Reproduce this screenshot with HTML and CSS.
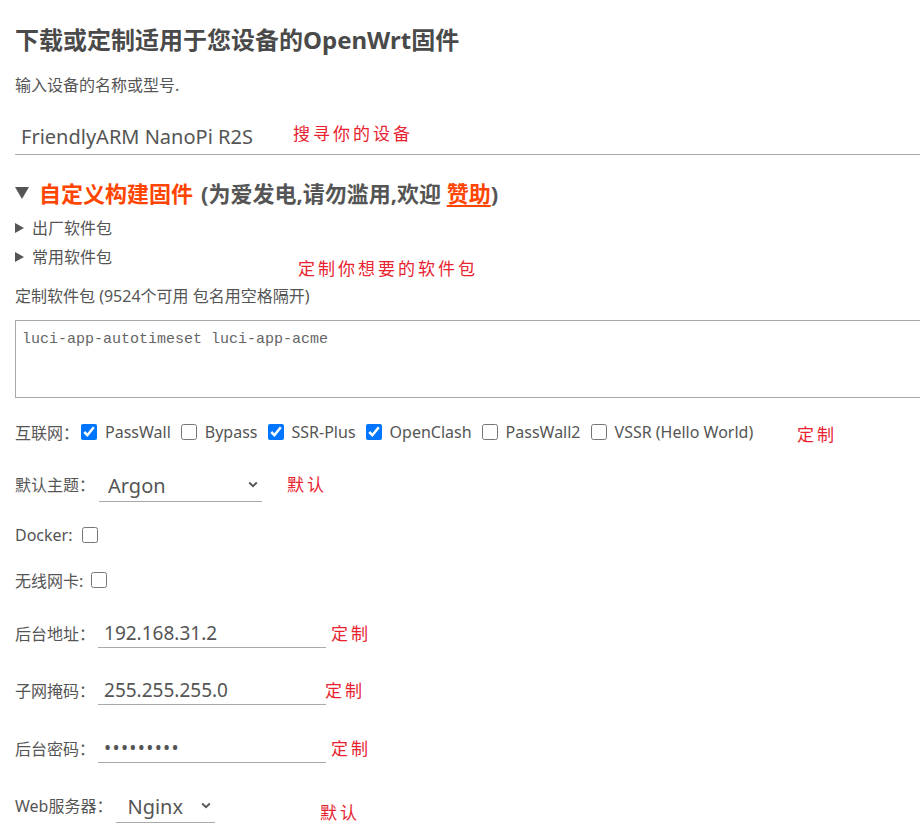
FILE: index.html
```html
<!DOCTYPE html>
<html lang="zh-CN">
<head>
<meta charset="utf-8">
<title>OpenWrt Firmware Selector</title>
<link rel="stylesheet" href="styles.css">
</head>
<body>
<main class="page">
  <h1 class="title">下载或定制适用于您设备的OpenWrt固件</h1>
  <p class="hint">输入设备的名称或型号.</p>
  <input class="model" type="text" value="FriendlyARM NanoPi R2S">

  <div class="section-head">
    <span class="tri-down"></span>
    <span class="accent">自定义构建固件</span>
    <span class="muted">(为爱发电,请勿滥用,欢迎 <a class="donate" href="#">赞助</a>)</span>
  </div>
  <div class="sub"><span class="tri-right"></span>出厂软件包</div>
  <div class="sub sub2"><span class="tri-right"></span>常用软件包</div>
  <div class="pkg-label">定制软件包 (9524个可用 包名用空格隔开)</div>
  <textarea class="pkgs">luci-app-autotimeset luci-app-acme</textarea>

  <div class="row r-net">
    <span class="lbl">互联网：</span>
    <input type="checkbox" class="cb cb-first" checked><span class="opt">PassWall</span>
    <input type="checkbox" class="cb"><span class="opt">Bypass</span>
    <input type="checkbox" class="cb" checked><span class="opt">SSR-Plus</span>
    <input type="checkbox" class="cb" checked><span class="opt">OpenClash</span>
    <input type="checkbox" class="cb"><span class="opt">PassWall2</span>
    <input type="checkbox" class="cb"><span class="opt">VSSR (Hello World)</span>
  </div>

  <div class="row r-theme">
    <span class="lbl">默认主题：</span>
    <span class="sel-wrap sel-theme">
      <select class="sel"><option>Argon</option></select>
      <svg class="chev" width="10" height="7" viewBox="0 0 10 7"><path d="M1.2 1.5 L5 5.2 L8.8 1.5" fill="none" stroke="#555" stroke-width="1.8"/></svg>
    </span>
  </div>

  <div class="row r-docker">
    <span class="lbl">Docker:</span>
    <input type="checkbox" class="cb cb-docker">
  </div>

  <div class="row r-wifi">
    <span class="lbl">无线网卡:</span>
    <input type="checkbox" class="cb cb-wifi">
  </div>

  <div class="row r-addr">
    <span class="lbl">后台地址：</span>
    <input class="field" type="text" value="192.168.31.2">
  </div>

  <div class="row r-mask">
    <span class="lbl">子网掩码：</span>
    <input class="field" type="text" value="255.255.255.0">
  </div>

  <div class="row r-pwd">
    <span class="lbl">后台密码：</span>
    <input class="field pwd" type="password" value="password1">
  </div>

  <div class="row r-web">
    <span class="lbl">Web服务器：</span>
    <span class="sel-wrap sel-web">
      <select class="sel"><option>Nginx</option></select>
      <svg class="chev" width="10" height="7" viewBox="0 0 10 7"><path d="M1.2 1.5 L5 5.2 L8.8 1.5" fill="none" stroke="#555" stroke-width="1.8"/></svg>
    </span>
  </div>

  <span class="note n1">搜寻你的设备</span>
  <span class="note n2">定制你想要的软件包</span>
  <span class="note n3">定制</span>
  <span class="note n4">默认</span>
  <span class="note n5">定制</span>
  <span class="note n6">定制</span>
  <span class="note n7">定制</span>
  <span class="note n8">默认</span>
</main>
</body>
</html>
```

FILE: styles.css
```css
html, body {
  margin: 0;
  padding: 0;
  overflow: hidden;
  background: #fff;
}
body {
  font-family: "Noto Sans", "Noto Sans CJK SC", sans-serif;
  font-size: 16px;
  color: #555;
}
.page {
  position: relative;
  padding: 24px 0 0 15px;
  width: 1000px;
  height: 809px;
}
.title {
  margin: 0;
  font-size: 24px;
  line-height: 32px;
  font-weight: 700;
  color: #4a4a4a;
}
.hint {
  margin: 18px 0 0;
  line-height: 22px;
}
.model {
  display: block;
  box-sizing: border-box;
  margin-top: 23px;
  width: 980px;
  height: 36px;
  border: none;
  border-bottom: 1px solid #aaa;
  padding: 0 0 0 6px;
  font-family: "Noto Sans", "Noto Sans CJK SC", sans-serif;
  font-size: 20px;
  color: #555;
  outline: none;
}
.section-head {
  margin-top: 23px;
  display: flex;
  align-items: center;
  line-height: 30px;
  font-size: 22px;
  font-weight: 700;
}
.tri-down {
  width: 0;
  height: 0;
  border-left: 7px solid transparent;
  border-right: 7px solid transparent;
  border-top: 12px solid #555;
  margin-right: 10px;
}
.accent { color: #ff4500; margin-right: 8px; }
.muted { color: #555; }
.donate { color: #ff4500; text-decoration: underline; text-underline-offset: 3px; }
.sub {
  margin-top: 8px;
  display: flex;
  align-items: center;
  line-height: 24px;
}
.sub2 { margin-top: 5px; }
.tri-right {
  width: 0;
  height: 0;
  border-top: 5px solid transparent;
  border-bottom: 5px solid transparent;
  border-left: 9px solid #555;
  margin-right: 8px;
}
.pkg-label {
  margin-top: 15px;
  line-height: 24px;
}
.pkgs {
  display: block;
  box-sizing: border-box;
  margin-top: 12px;
  width: 980px;
  height: 78px;
  border: 1px solid #aaa;
  padding: 9px 6px;
  font-family: "Liberation Mono", monospace;
  font-size: 15px;
  line-height: 20px;
  color: #666;
  resize: none;
  outline: none;
}
.row {
  display: flex;
  align-items: center;
  height: 44px;
}
.r-net { margin-top: 12px; }
.r-theme { margin-top: 8px; }
.r-docker { margin-top: 7px; }
.r-wifi { margin-top: 1px; }
.r-addr { margin-top: 9px; }
.r-mask { margin-top: 13px; }
.r-pwd { margin-top: 14px; }
.r-web { margin-top: 13px; }
.cb {
  width: 16px;
  height: 16px;
  margin: 0 8px 0 10px;
  accent-color: #0075ff;
}
.cb-first { margin-left: 2px; }
.cb-docker { margin-left: 9px; }
.cb-wifi { margin-left: 8px; }
.opt { white-space: nowrap; }
.sel-wrap {
  position: relative;
  display: inline-block;
}
.sel {
  appearance: none;
  -webkit-appearance: none;
  border: none;
  border-bottom: 1px solid #aaa;
  border-radius: 0;
  background: transparent;
  font-family: "Noto Sans", "Noto Sans CJK SC", sans-serif;
  font-size: 20px;
  color: #555;
  height: 32px;
  outline: none;
}
.sel-theme { margin-left: 4px; margin-top: 4px; }
.sel-theme .sel { width: 163px; padding-left: 9px; }
.sel-theme .chev { left: 149px; }
.sel-web { margin-left: 4px; margin-top: 4px; }
.sel-web .sel { width: 99px; padding-left: 11px; }
.sel-web .chev { left: 85px; }
.chev {
  position: absolute;
  top: 11px;
}
.field {
  box-sizing: border-box;
  margin: 0 0 0 3px;
  width: 228px;
  height: 30px;
  border: none;
  border-bottom: 1px solid #aaa;
  padding: 0 0 0 6px;
  font-family: "Noto Sans", "Noto Sans CJK SC", sans-serif;
  font-size: 19px;
  color: #555;
  outline: none;
}
.pwd { letter-spacing: 1.3px; }
.note {
  position: absolute;
  font-family: "Noto Sans CJK SC", sans-serif;
  font-weight: 400;
  font-size: 17px;
  line-height: 22px;
  letter-spacing: 3px;
  color: #e8232f;
  white-space: nowrap;
}
.n1 { left: 293px; top: 122px; }
.n2 { left: 298px; top: 257px; }
.n3 { left: 797px; top: 423px; }
.n4 { left: 287px; top: 473px; }
.n5 { left: 331px; top: 622px; }
.n6 { left: 325px; top: 679px; }
.n7 { left: 331px; top: 737px; }
.n8 { left: 320px; top: 801px; }
```
